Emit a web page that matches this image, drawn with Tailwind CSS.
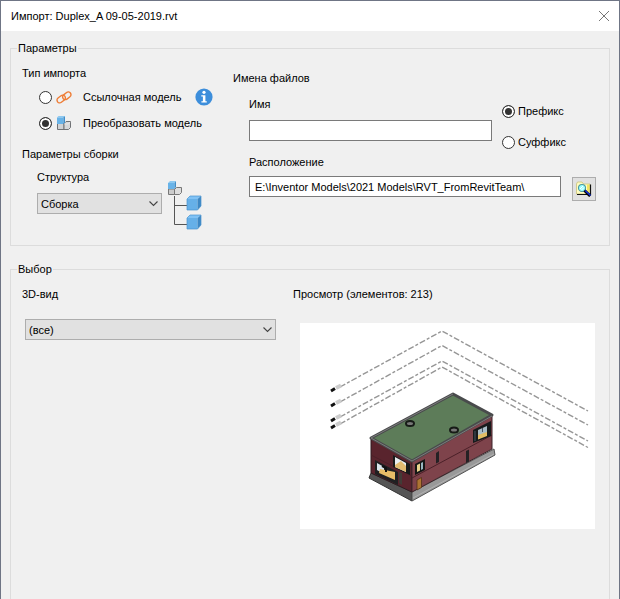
<!DOCTYPE html>
<html lang="ru">

<head>
  <meta charset="UTF-8">
  <meta name="viewport" content="width=device-width, initial-scale=1.0">
  <title>Импорт</title>
  <script src="https://cdn.jsdelivr.net/npm/@tailwindcss/browser@4"></script>
</head>

<body class="bg-[#f0f0f0] text-black text-[11px] leading-4 font-['Liberation_Sans',sans-serif]">
  <form class="min-h-screen flex flex-col border border-b-0 border-[#6f7585]">
    <header class="flex items-center justify-between h-[30px] pl-[10px] pr-[9px] bg-white">
      <h1>Импорт: Duplex_A 09-05-2019.rvt</h1>
      <button type="button" aria-label="Закрыть">
        <svg class="size-3" viewBox="0 0 12 12" fill="none" stroke="#777" stroke-width="1"><path d="M1 1l10 10M11 1L1 11" /></svg>
      </button>
    </header>

    <main class="flex-1 flex flex-col gap-[15px] px-[9px] pt-[9px]">
      <fieldset class="border border-[#dcdcdc] pl-[11px] pr-[13px] pb-[15px]">
        <legend class="-ml-[5px] px-px">Параметры</legend>

        <div class="flex gap-[10px]">
          <div class="w-[201px] pt-[9px]">
            <h2>Тип импорта</h2>
            <div class="pl-[17px] pt-[3px]">
              <div class="flex items-center h-[26px]">
                <input type="radio" name="type" id="linked" class="appearance-none size-[13px] rounded-full border border-[#333] bg-white checked:bg-[#333] checked:shadow-[inset_0_0_0_2px_#fff]">
                <label for="linked" class="flex items-center gap-[11px] pl-1">
                  <svg class="size-4" viewBox="0 0 16 16" fill="none" stroke="#ee7c35" stroke-width="1.4">
                    <rect x="-4.6" y="-2.7" width="9.2" height="5.400" rx="2.700" transform="translate(5.200 10) rotate(-38)" />
                    <rect x="-4.6" y="-2.7" width="9.2" height="5.400" rx="2.700" transform="translate(10.800 6.800) rotate(-38)" />
                  </svg>
                  Ссылочная модель
                </label>
                <button type="button" aria-label="Справка" class="ml-auto mr-[10px]">
                  <svg class="size-[18px]" viewBox="0 0 18 18">
                    <circle cx="9" cy="9" r="8.6" fill="#3d8edb" />
                    <circle cx="9" cy="4.3" r="1.6" fill="#fff" />
                    <path d="M6.3 7.2h4.1v6h1.4v1.4H6.4v-1.4h1.5V8.6H6.3z" fill="#fff" />
                  </svg>
                </button>
              </div>
              <div class="flex items-center h-[26px]">
                <input type="radio" name="type" id="convert" checked class="appearance-none size-[13px] rounded-full border border-[#333] bg-white checked:bg-[#333] checked:shadow-[inset_0_0_0_2px_#fff]">
                <label for="convert" class="flex items-center gap-[11px] pl-1">
                  <svg class="size-4" viewBox="0 0 16 16">
                    <path d="M1.500 8.500h6.500v6H1.500z" fill="#cfd2d5" stroke="#707275" />
                    <path d="M8 8.500L10 6.500h4.500v6l-2 2H8z" fill="#d6d8da" stroke="#707275" />
                    <path d="M8.500 9h4l1.500-2" fill="none" stroke="#eee" stroke-width=".8" />
                    <path d="M1 2.500L2.500 1H9L7.500 2.500z" fill="#8cc8f0" />
                    <path d="M1 2.500h6.500V9H1z" fill="#68b3e8" />
                    <path d="M7.500 2.500L9 1v6.500L7.500 9z" fill="#3f8ec9" />
                  </svg>
                  Преобразовать модель
                </label>
              </div>
            </div>

            <h2 class="pt-[10px]">Параметры сборки</h2>
            <div class="flex pl-[15px] pt-[7px] gap-[5px]">
              <div class="w-[125px]">
                <label for="structure">Структура</label>
                <div class="relative mt-2">
                  <select id="structure" class="appearance-none block w-full h-[21px] pl-[3px] bg-[#e1e1e1] border border-[#adadad]">
                    <option>Сборка</option>
                  </select>
                  <svg class="absolute right-1 top-[7px] w-[9px] h-[7px] pointer-events-none" viewBox="0 0 9 7" fill="none" stroke="#444" stroke-width="1.1"><path d="M.5 1.5l4 4 4-4" /></svg>
                </div>
              </div>
              <svg class="w-[36px] h-[50px] mt-[11px]" viewBox="0 0 36 50">
                <path d="M7.500 16v28.500H20M7.500 25.500H20" fill="none" stroke="#555" />
                <path d="M1.500 9h6v5.500h-6z" fill="#ccc" stroke="#777" />
                <path d="M7.500 9.500l2-2h5v5l-2 2h-5z" fill="#ddd" stroke="#777" />
                <path d="M1 3l2-2h6L7.500 3z" fill="#8cc8f0" />
                <path d="M1 3h6.500v6H1z" fill="#68b3e8" />
                <path d="M7.500 3L9 1v6L7.500 9z" fill="#3f8ec9" />
                <g id="cube">
                  <path d="M20 19l3-3h11l-3.500 3z" fill="#80c2f5" />
                  <path d="M20 19h10.500v11H20z" fill="#66b0e8" />
                  <path d="M30.500 19l3.500-3v10l-3.500 4z" fill="#3e88c4" />
                  <path d="M20 19l3-3h11v10l-3.500 4H20z" fill="none" stroke="#4794cf" stroke-width=".7" />
                </g>
                <use href="#cube" y="19" />
              </svg>
            </div>
          </div>

          <div class="flex-1 pt-[14px]">
            <h2>Имена файлов</h2>
            <div class="flex gap-[10px] pl-4 pt-[10px]">
              <div class="flex-1">
                <label for="name">Имя</label>
                <input id="name" type="text" class="block w-full h-[21px] mt-2 px-[5px] bg-white border border-[#7a7a7a]">
              </div>
              <div class="w-[94px] flex flex-col gap-[15px] pt-[7px]">
                <label class="flex items-center gap-[3px]"><input type="radio" name="affix" checked class="appearance-none size-[13px] rounded-full border border-[#333] bg-white checked:bg-[#333] checked:shadow-[inset_0_0_0_2px_#fff]">Префикс</label>
                <label class="flex items-center gap-[3px]"><input type="radio" name="affix" class="appearance-none size-[13px] rounded-full border border-[#333] bg-white checked:bg-[#333] checked:shadow-[inset_0_0_0_2px_#fff]">Суффикс</label>
              </div>
            </div>
            <div class="pl-4 pt-1">
              <label for="location">Расположение</label>
              <div class="flex items-start gap-[11px] pt-[6px]">
                <input id="location" type="text" value="E:\Inventor Models\2021 Models\RVT_FromRevitTeam\" class="flex-1 min-w-0 h-[21px] px-[5px] bg-white border border-[#7a7a7a]">
                <button type="button" aria-label="Обзор" class="grid place-items-center size-6 mt-px bg-[#e1e1e1] border border-[#adadad]">
                  <svg class="size-4" viewBox="0 0 16 16">
                    <path d="M.500 3l1-2h4.500l1.500 2H14v10H.500z" fill="#fffcc0" stroke="#c9c27a" stroke-width=".8" />
                    <path d="M11 3.500h2.500v8h-2.500z" fill="#f3e560" />
                    <path d="M1 13.500h13.500V3.500" fill="none" stroke="#111" stroke-width="1.200" />
                    <circle cx="6" cy="7" r="3.500" fill="#9ff" stroke="#4a979e" stroke-width="1.100" />
                    <path d="M4 8l3-3M5.500 9l2.500-2.500" stroke="#fff" />
                    <path d="M8.500 9.500l5.700 5.500" stroke="#000" stroke-width="3" />
                    <path d="M9.200 9.500l5.300 5" stroke="#1230d8" stroke-width="1.600" />
                  </svg>
                </button>
              </div>
            </div>
          </div>
        </div>
      </fieldset>

      <fieldset class="flex-1 border border-b-0 border-[#dcdcdc] pl-[11px] pr-[14px]">
        <legend class="-ml-[5px] px-px">Выбор</legend>

        <div class="flex gap-[17px] pt-[9px]">
          <div class="w-[254px]">
            <label for="view">3D-вид</label>
            <div class="relative ml-[3px] mt-[17px]">
              <select id="view" class="appearance-none block w-full h-[21px] pl-[3px] bg-[#e1e1e1] border border-[#adadad]">
                <option>(все)</option>
              </select>
              <svg class="absolute right-1 top-[7px] w-[9px] h-[7px] pointer-events-none" viewBox="0 0 9 7" fill="none" stroke="#444" stroke-width="1.1"><path d="M.5 1.5l4 4 4-4" /></svg>
            </div>
          </div>

          <div class="flex-1">
            <h2>Просмотр (элементов: 213)</h2>
            <div class="ml-[7px] mt-[21px] bg-white">
              <svg class="block w-full" viewBox="300 323 295 206" stroke-linejoin="round">
                <!-- level lines -->
                <g fill="none" stroke="#969696" stroke-width="1.400" stroke-dasharray="6 2 3 2">
                  <path d="M340 387L442 331L588 411" />
                  <path d="M340 402L442 345.500L588 425" />
                  <path d="M340 417L442 361L588 441" />
                  <path d="M340 424L442 367L588 447.500" />
                </g>
                <path d="M331 391l4-2.500M331 406l4-2.500M331 421l4-2.500M331 428l4-2.500" stroke="#111" stroke-width="3" />
                <path d="M336 388l5-2.500M336 403l5-2.500M336 418l5-2.500M336 425l5-2.500" stroke="#ccc" stroke-width="4" />
                <!-- base -->
                <path d="M369 478l2-5 41 19v9z" fill="#555" stroke="#333" />
                <path d="M412 492l82-43 1 6-83 46z" fill="#999" stroke="#555" />
                <path d="M413 498l81-44" stroke="#bbb" stroke-width=".7" />
                <!-- walls -->
                <path d="M371 438l41 23v31l-41-19z" fill="#59242d" stroke="#2e1b20" />
                <path d="M412 461l80-45v33l-80 43z" fill="#7e434b" stroke="#3c252a" />
                <path d="M412 478l80-43M371 455l41 21" stroke="#4b2028" />
                <!-- roof -->
                <path d="M371 438l82-44 39 21-80 46z" fill="#5d7c59" stroke="#494b4c" stroke-width="3" />
                <path d="M371 438l82-44" stroke="#898989" stroke-width=".8" />
                <path d="M371 438l41 23 80-45" fill="none" stroke="#888" stroke-width=".8" />
                <g fill="#777" stroke="#171b17" stroke-width="2">
                  <ellipse cx="410" cy="423.500" rx="4" ry="2.500" />
                  <ellipse cx="454" cy="430" rx="4" ry="2.500" />
                </g>
                <!-- left windows -->
                <path d="M393 455l17 9v11l-17-8z" fill="#171a1b" />
                <path d="M395 457l11 6v9l-11-5z" fill="#e7edf0" />
                <path d="M395 465l6-4 5 5v6l-11-5z" fill="#e1bb70" />
                <path d="M375 460l23 12v13l-23-11z" fill="#202022" />
                <path d="M377 463l7 4v7l-7-4z" fill="#dae5ec" />
                <path d="M380 469l15 3v8l-16-7z" fill="#e7bc67" />
                <path d="M382 466l4 2v4" stroke="#111" stroke-width="2" fill="none" />
                <path d="M399 472l3 1v12l-3-2z" fill="#413c37" />
                <!-- right windows -->
                <path d="M415 464l10-5v11l-10 5z" fill="#151716" />
                <path d="M417 465l3-1.500v7l-3 1.500z" fill="#e8d38d" />
                <path d="M421 463l2-1v7l-2 1z" fill="#97b7c1" />
                <path d="M417 480l4.500-2.500v10l-4.500 2.500z" fill="#ad7433" stroke="#543119" stroke-width=".8" />
                <path d="M436 453l3-2v11l-3 1.500zM466 451l3-1.500v12l-3 1.500z" fill="#252124" />
                <path d="M473 430l18-9v15l-18 7z" fill="#171b1c" />
                <path d="M478 430l9-4v9l-9 4z" fill="#a9bdc6" />
                <path d="M478 435l9-3v4l-9 3.500z" fill="#e2bd64" />
                <path d="M475 431v10M482.500 428v4" stroke="#475463" />
              </svg>
            </div>
          </div>
        </div>
      </fieldset>
    </main>
  </form>
</body>

</html>
